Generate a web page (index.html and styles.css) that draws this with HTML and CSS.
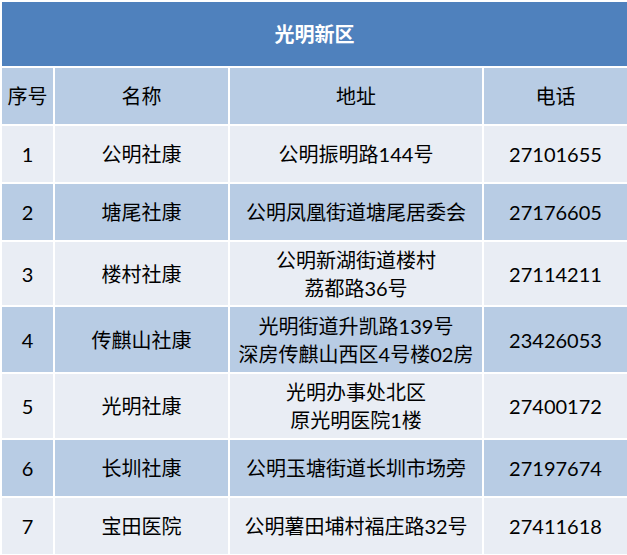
FILE: index.html
```html
<!DOCTYPE html>
<html lang="zh-CN">
<head>
<meta charset="utf-8">
<title>光明新区</title>
<link rel="stylesheet" href="styles.css">
</head>
<body>
<table class="sheet">
  <colgroup>
    <col class="c-no">
    <col class="c-name">
    <col class="c-addr">
    <col class="c-tel">
  </colgroup>
  <thead>
    <tr class="title-row"><th colspan="4">光明新区</th></tr>
    <tr class="head-row"><th>序号</th><th>名称</th><th>地址</th><th>电话</th></tr>
  </thead>
  <tbody>
    <tr class="light h58"><td>1</td><td>公明社康</td><td>公明振明路144号</td><td>27101655</td></tr>
    <tr class="dark h58"><td>2</td><td>塘尾社康</td><td>公明凤凰街道塘尾居委会</td><td>27176605</td></tr>
    <tr class="light h65"><td>3</td><td>楼村社康</td><td>公明新湖街道楼村<br>荔都路36号</td><td>27114211</td></tr>
    <tr class="dark h67"><td>4</td><td>传麒山社康</td><td>光明街道升凯路139号<br>深房传麒山西区4号楼02房</td><td>23426053</td></tr>
    <tr class="light h66"><td>5</td><td>光明社康</td><td>光明办事处北区<br>原光明医院1楼</td><td>27400172</td></tr>
    <tr class="dark h58"><td>6</td><td>长圳社康</td><td>公明玉塘街道长圳市场旁</td><td>27197674</td></tr>
    <tr class="light h58"><td>7</td><td>宝田医院</td><td>公明薯田埔村福庄路32号</td><td>27411618</td></tr>
  </tbody>
</table>
</body>
</html>
```
FILE: styles.css
```css
html, body {
  margin: 0;
  padding: 0;
  background: #ffffff;
}

.sheet {
  width: 627px;
  border-collapse: collapse;
  table-layout: fixed;
  font-family: Lato, "Noto Sans CJK SC", sans-serif;
  font-size: 20px;
  color: #000000;
}

.c-no { width: 53px; }
.c-name { width: 175px; }
.c-addr { width: 254px; }
.c-tel { width: 145px; }

.sheet th,
.sheet td {
  border: 2px solid #ffffff;
  text-align: center;
  vertical-align: middle;
  padding: 0;
  line-height: 28px;
  font-weight: normal;
}

.title-row th {
  background: #4f81bd;
  color: #ffffff;
  font-weight: bold;
  height: 64px;
}

.head-row th {
  background: #b8cce4;
  height: 56px;
}

.light td { background: #e9edf4; }
.dark td { background: #b8cce4; }

.h58 td { height: 56px; }
.h65 td { height: 63px; }
.h66 td { height: 64px; }
.h67 td { height: 65px; }
```
